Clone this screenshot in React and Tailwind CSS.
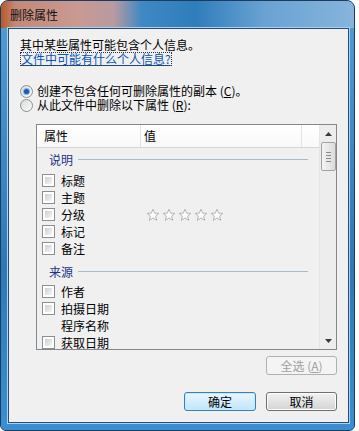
import React from 'react';

const font = { fontFamily: '"Noto Sans CJK SC", "Liberation Sans", sans-serif' };

function Checkbox() {
  return (
    <span className="w-[13px] h-[13px] border border-[#8e8f8f] bg-white p-[2px] shrink-0">
      <span className="block w-full h-full bg-gradient-to-br from-[#cbcfd5] to-[#f6f6f6]" />
    </span>
  );
}

function Radio({ checked }) {
  return (
    <span className="w-[13px] h-[13px] rounded-full border border-[#8e8f8f] bg-gradient-to-br from-[#d8dadc] to-[#fbfbfb] flex items-center justify-center shrink-0">
      {checked && <span className="w-[5px] h-[5px] rounded-full bg-[#1d5aa8] ring-1 ring-[#7fb3e8]" />}
    </span>
  );
}

function Star() {
  return (
    <svg width="14" height="14" viewBox="0 0 14 14">
      <path d="M7 1.2 L8.7 5.1 L12.9 5.4 L9.7 8.1 L10.7 12.3 L7 10 L3.3 12.3 L4.3 8.1 L1.1 5.4 L5.3 5.1 Z" fill="#fbfbfb" stroke="#b3b3b3" strokeWidth="1" strokeLinejoin="round" />
    </svg>
  );
}

function Item({ label, box = true, children }) {
  return (
    <div className="h-[17px] flex items-center">
      <div className="w-[104px] pl-[5px] flex items-center gap-[6px]">
        {box ? <Checkbox /> : <span className="w-[13px]" />}
        <span>{label}</span>
      </div>
      {children}
    </div>
  );
}

function Group({ label }) {
  return (
    <div className="h-[17px] flex items-center pl-[12px] pr-[11px] gap-[5px]">
      <span className="text-[#1e3287]">{label}</span>
      <span className="flex-1 h-px bg-[#a9b7cf]" />
    </div>
  );
}

export default function App() {
  return (
    <div className="w-[359px] h-[431px] bg-white text-[12px] leading-[14px] text-black" style={font}>
      <div className="w-[355px] h-[431px] flex flex-col rounded-t-[8px] rounded-b-[6px] border border-[#1d3b5e] overflow-hidden bg-[#3f93d3]">
        <div className="h-[27px] shrink-0 flex items-center pl-[9px] bg-[linear-gradient(90deg,#b55a28_0%,#c48878_4%,#c99a92_22%,#b89aa0_32%,#3d89c4_40%,#2f7dbb_55%,#6aa3d3_75%,#86b4dc_100%)]">
          <span className="text-[12px] text-[#111]">删除属性</span>
        </div>
        <div className="flex-1 flex pl-[7px] pr-[5px] pb-[7px] bg-[linear-gradient(180deg,#4f9ad2_0%,#2e79b4_60%,#3b8fd0_100%)]">
          <div className="flex-1 flex flex-col border border-[#2a4c72] bg-[#f0f0f0] pl-[11px] pr-[11px] outline outline-1 outline-[#a9d2f2]">
            <div className="mt-[9px] h-[14px]">其中某些属性可能包含个人信息。</div>
            <div className="h-[14px]">
              <span className="inline-block h-[14px] px-px outline outline-1 outline-dotted outline-[#333] -outline-offset-1 text-[#0b54b8] underline">文件中可能有什么个人信息?</span>
            </div>
            <div className="mt-[18px] h-[14px] flex items-center gap-[4px]">
              <Radio checked />
              <span>创建不包含任何可删除属性的副本 (<u>C</u>)。</span>
            </div>
            <div className="h-[14px] flex items-center gap-[4px]">
              <Radio />
              <span>从此文件中删除以下属性 (<u>R</u>):</span>
            </div>
            <div className="mt-[12px] ml-[16px] h-[226px] border border-[#828790] flex">
              <div className="flex-1 flex flex-col">
                <div className="h-[23px] shrink-0 flex bg-gradient-to-b from-white to-[#f9f9f9] border-b border-[#d5d5d5]">
                  <div className="w-[104px] pl-[7px] flex items-center border-r border-[#e3e3e3]">属性</div>
                  <div className="w-[161px] pl-[3px] flex items-center border-r border-[#e3e3e3]">值</div>
                  <div className="flex-1" />
                </div>
                <div className="mt-[3px]"><Group label="说明" /></div>
                <div className="mt-[4px]">
                  <Item label="标题" />
                  <Item label="主题" />
                  <Item label="分级">
                    <div className="ml-[5px] flex gap-[2px]">
                      <Star /><Star /><Star /><Star /><Star />
                    </div>
                  </Item>
                  <Item label="标记" />
                  <Item label="备注" />
                </div>
                <div className="mt-[6px]"><Group label="来源" /></div>
                <div className="mt-[3px]">
                  <Item label="作者" />
                  <Item label="拍摄日期" />
                  <Item label="程序名称" box={false} />
                  <Item label="获取日期" />
                </div>
              </div>
              <div className="w-[17px] shrink-0 flex flex-col items-center bg-[#ededed] border-l border-[#e6e6e6]">
                <div className="h-[17px] flex items-center justify-center">
                  <svg width="7" height="4" viewBox="0 0 7 4"><path d="M3.5 0 L7 4 L0 4 Z" fill="#3a3a3a" /></svg>
                </div>
                <div className="w-[15px] h-[29px] rounded-[2px] border border-[#9ea3a8] bg-gradient-to-r from-[#f3f3f3] to-[#dcdcdc] flex flex-col items-center justify-center gap-[2px]">
                  <span className="w-[5px] h-px bg-[#8a8a8a]" />
                  <span className="w-[5px] h-px bg-[#8a8a8a]" />
                  <span className="w-[5px] h-px bg-[#8a8a8a]" />
                  <span className="w-[5px] h-px bg-[#8a8a8a]" />
                </div>
                <div className="flex-1" />
                <div className="h-[17px] flex items-center justify-center">
                  <svg width="7" height="4" viewBox="0 0 7 4"><path d="M0 0 L7 0 L3.5 4 Z" fill="#3a3a3a" /></svg>
                </div>
              </div>
            </div>
            <div className="mt-[6px] flex justify-end">
              <button className="w-[71px] h-[19px] rounded-[3px] border border-[#adb2b5] bg-[#f4f4f4] text-[#a0a0a0] flex items-center justify-center">
                全选 (<u>A</u>)
              </button>
            </div>
            <div className="mt-[17px] flex justify-end gap-[10px]">
              <button className="w-[72px] h-[19px] rounded-[3px] border border-[#3c7fb1] bg-gradient-to-b from-[#eaf6fd] to-[#bee6fd] shadow-[inset_0_0_0_1px_#c6eafc] flex items-center justify-center">
                确定
              </button>
              <button className="w-[71px] h-[19px] rounded-[3px] border border-[#707070] bg-gradient-to-b from-[#f2f2f2] to-[#d4d4d4] shadow-[inset_0_0_0_1px_#fcfcfc] flex items-center justify-center">
                取消
              </button>
            </div>
          </div>
        </div>
      </div>
    </div>
  );
}
